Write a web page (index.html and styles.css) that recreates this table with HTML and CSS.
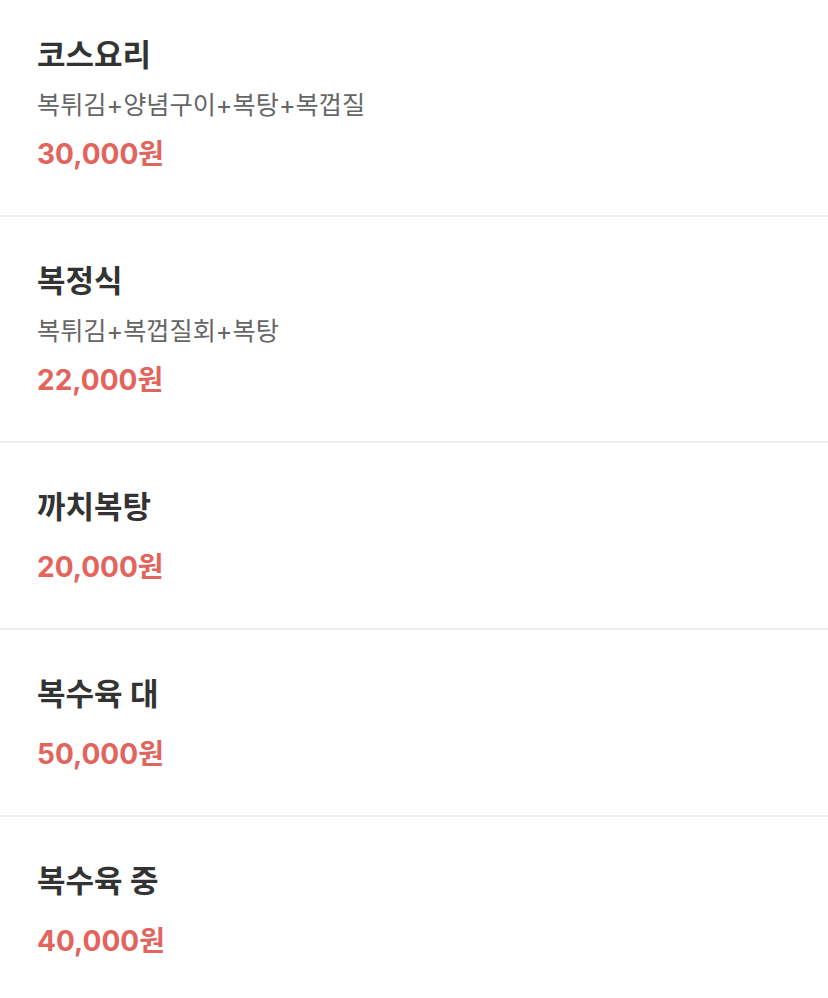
FILE: index.html
```html
<!DOCTYPE html>
<html lang="ko">
<head>
<meta charset="utf-8">
<link rel="stylesheet" href="styles.css">
</head>
<body>
<ul class="menu">
  <li class="item">
    <div class="name">코스요리</div>
    <div class="desc">복튀김+양념구이+복탕+복껍질</div>
    <div class="price">30,000원</div>
  </li>
  <li class="item">
    <div class="name">복정식</div>
    <div class="desc">복튀김+복껍질회+복탕</div>
    <div class="price">22,000원</div>
  </li>
  <li class="item">
    <div class="name">까치복탕</div>
    <div class="price">20,000원</div>
  </li>
  <li class="item">
    <div class="name">복수육 대</div>
    <div class="price">50,000원</div>
  </li>
  <li class="item">
    <div class="name">복수육 중</div>
    <div class="price">40,000원</div>
  </li>
</ul>
</body>
</html>
```
FILE: styles.css
```css
html, body {
  margin: 0;
  padding: 0;
  background: #fff;
}
body {
  font-family: Inter, "Noto Sans CJK KR", sans-serif;
}
.menu {
  list-style: none;
  margin: 0;
  padding: 0;
}
.item {
  padding: 44px 37px 41px;
  border-bottom: 2px solid #eeeeee;
  display: flex;
  flex-direction: column;
}
.item:first-child {
  padding-top: 35px;
}
.name {
  font-size: 31px;
  font-weight: 700;
  line-height: 40px;
  color: #333333;
  margin-bottom: 10px;
}
.desc {
  font-size: 25.2px;
  line-height: 37px;
  margin-top: 2px;
  color: #666666;
}
.price {
  font-size: 28px;
  font-weight: 700;
  line-height: 40px;
  color: #e2645d;
  margin-top: 10px;
}
```
